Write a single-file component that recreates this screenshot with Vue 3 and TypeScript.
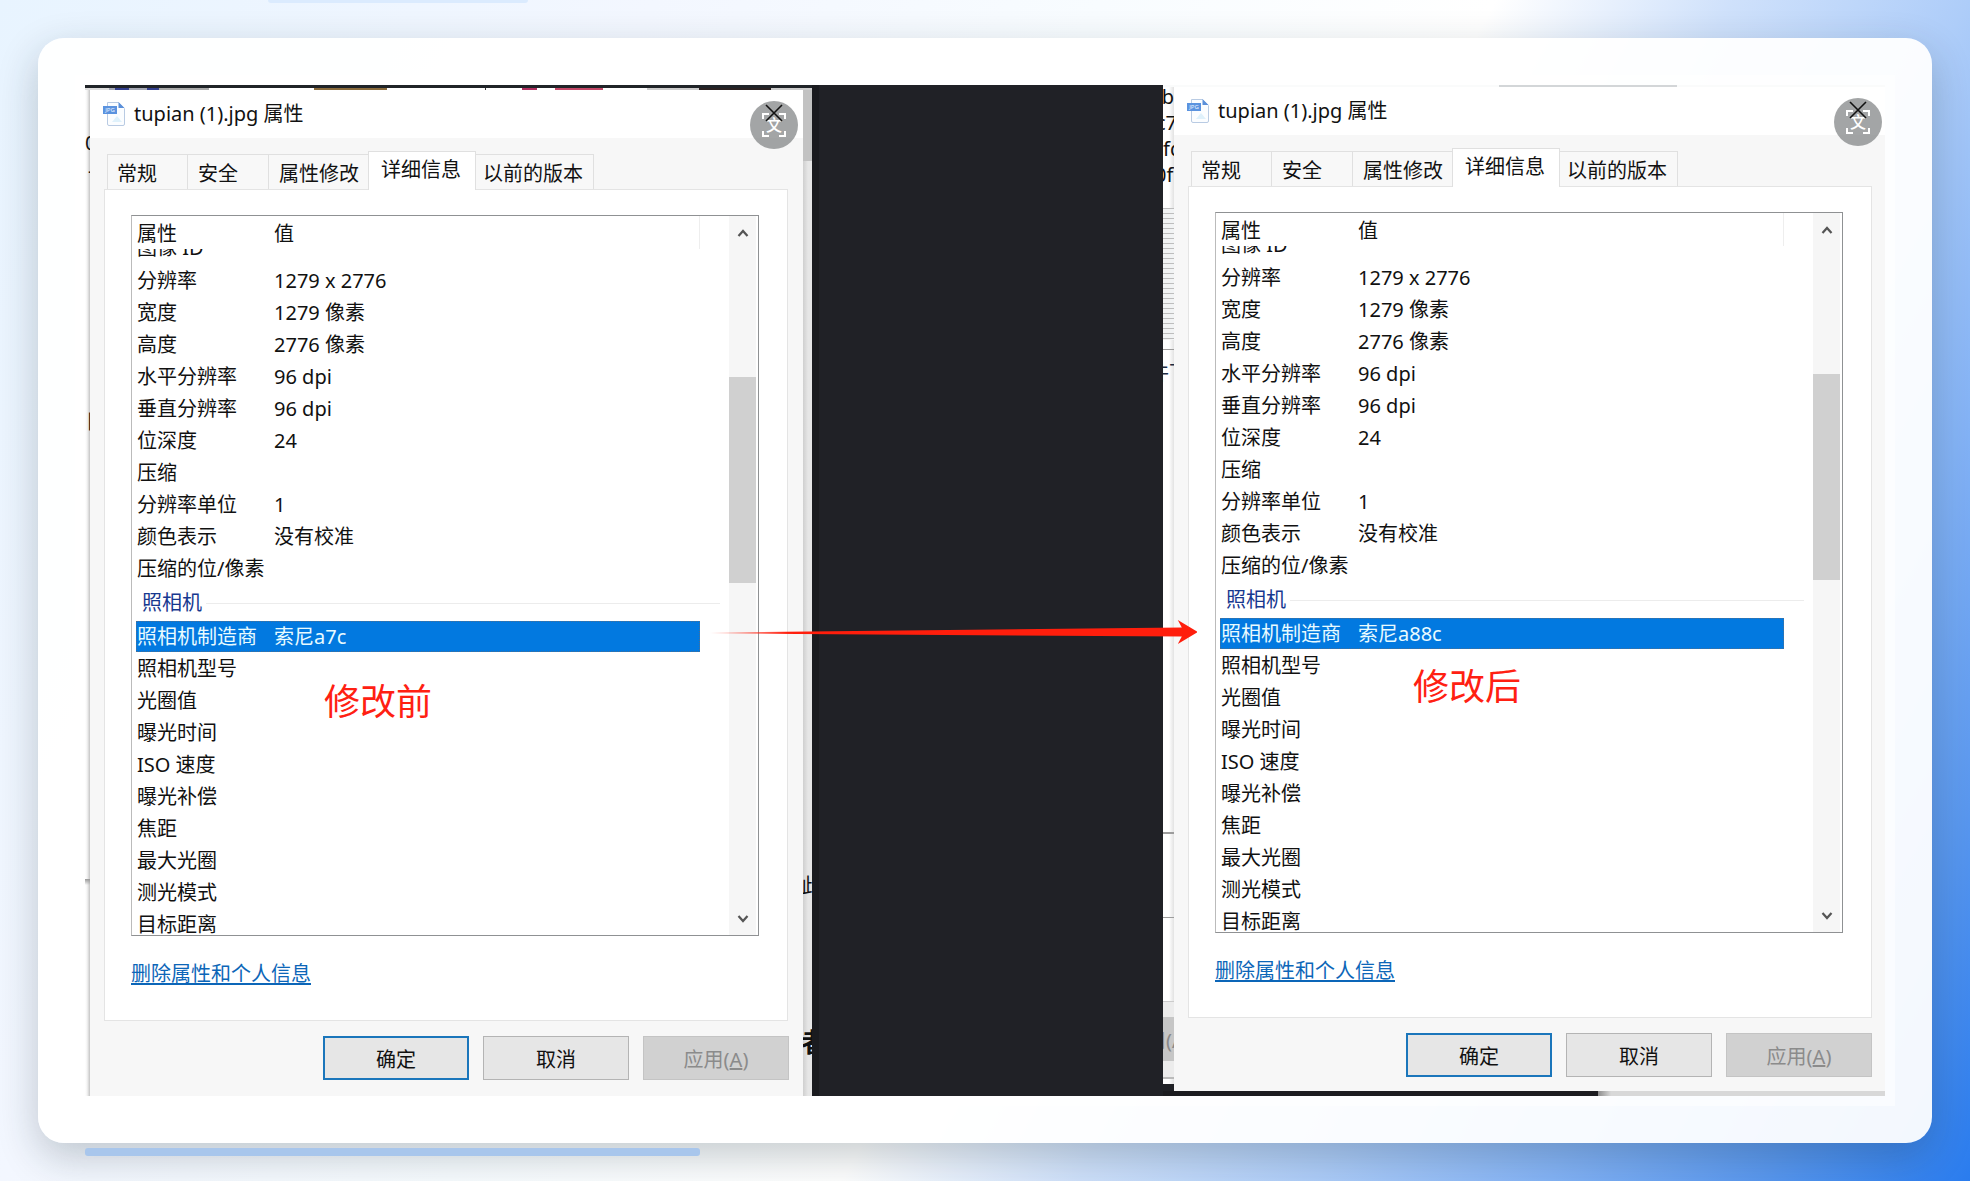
<script setup lang="ts">
interface Row {
  name: string
  value?: string
  kind?: 'cut' | 'group' | 'selected'
}

interface Dialog {
  id: string
  note: string
  rows: Row[]
}

const tabs = ['常规', '安全', '属性修改', '详细信息', '以前的版本']
const activeTab = '详细信息'

function buildRows(maker: string): Row[] {
  return [
    { name: '图像 ID', kind: 'cut' },
    { name: '分辨率', value: '1279 x 2776' },
    { name: '宽度', value: '1279 像素' },
    { name: '高度', value: '2776 像素' },
    { name: '水平分辨率', value: '96 dpi' },
    { name: '垂直分辨率', value: '96 dpi' },
    { name: '位深度', value: '24' },
    { name: '压缩' },
    { name: '分辨率单位', value: '1' },
    { name: '颜色表示', value: '没有校准' },
    { name: '压缩的位/像素' },
    { name: '照相机', kind: 'group' },
    { name: '照相机制造商', value: maker, kind: 'selected' },
    { name: '照相机型号' },
    { name: '光圈值' },
    { name: '曝光时间' },
    { name: 'ISO 速度' },
    { name: '曝光补偿' },
    { name: '焦距' },
    { name: '最大光圈' },
    { name: '测光模式' },
    { name: '目标距离' },
  ]
}

const dialogs: Dialog[] = [
  { id: 'before', note: '修改前', rows: buildRows('索尼a7c') },
  { id: 'after', note: '修改后', rows: buildRows('索尼a88c') },
]
</script>

<template>
  <div class="page">
    <div class="deco deco-top"></div>
    <main class="card">
      <div class="stage">
        <section v-for="d in dialogs" :key="d.id" class="pane" :class="d.id">
          <div class="thumbs"></div>
          <div class="pane-row">
            <div class="edge edge-left">
              <template v-if="d.id === 'before'">
                <span class="frag f-zero">0</span>
                <span class="frag f-dot">-</span>
                <span class="frag f-eye">目</span>
                <span class="notch"></span>
              </template>
              <template v-else>
                <span class="frag g-1">4b</span>
                <span class="frag g-2">c7</span>
                <span class="frag g-3">fd</span>
                <span class="frag g-4">0fl</span>
                <span class="ruled"></span>
                <span class="rule rule-a"></span>
                <span class="frag g-5">件下</span>
                <span class="rule rule-b"></span>
                <span class="rule rule-c"></span>
                <span class="old-footer"><span class="old-button"><span>用(A)</span></span></span>
              </template>
            </div>
            <div class="dialog">
              <header class="titlebar">
                <svg class="file-icon" width="24" height="26" viewBox="0 0 24 26" aria-hidden="true">
                  <path d="M5.500 1.500h11l6 6v15.500a1.500 1.500 0 0 1-1.500 1.500h-14a1.500 1.500 0 0 1-1.500-1.500z" fill="#fbfdff" stroke="#b9cbe3" />
                  <path d="M16.500 1v6h6z" fill="#5b90da" />
                  <path d="M10 21l5-6 5 6z" fill="#dff1fb" />
                  <rect x="1" y="5" width="14" height="8" fill="#5b93df" />
                  <text x="8" y="11" text-anchor="middle" font-size="6" fill="#e8f2ff">JPG</text>
                </svg>
                <h1>tupian (1).jpg 属性</h1>
                <button class="badge" type="button" aria-label="关闭">
                  <svg width="48" height="48" viewBox="0 0 48 48">
                    <circle cx="24" cy="24" r="24" fill="#808284" fill-opacity="0.72" />
                    <path d="M13 18v-5h6M29 13h6v5M35 30v5h-6M19 35h-6v-5" fill="none" stroke="#fff" stroke-width="2" />
                    <text x="24" y="30" text-anchor="middle" font-size="16" font-weight="500" fill="#fff">文</text>
                    <path d="M16 4l16 16M32 4L16 20" fill="none" stroke="#111" stroke-width="1.600" />
                  </svg>
                </button>
              </header>
              <div class="tabs" role="tablist">
                <button
                  v-for="t in tabs"
                  :key="t"
                  type="button"
                  role="tab"
                  class="tab"
                  :class="{ active: t === activeTab }"
                  :aria-selected="t === activeTab"
                >{{ t }}</button>
              </div>
              <div class="panel" role="tabpanel">
                <div class="list">
                  <table class="grid">
                    <thead>
                      <tr><th scope="col">属性</th><th scope="col">值</th></tr>
                    </thead>
                    <tbody>
                      <tr v-for="r in d.rows" :key="r.name" :class="r.kind">
                        <td>{{ r.name }}</td>
                        <td>{{ r.value }}</td>
                      </tr>
                    </tbody>
                  </table>
                  <div class="scrollbar">
                    <button type="button" class="arrow" aria-label="向上滚动">
                      <svg width="12" height="10" viewBox="0 0 12 10"><path d="M1.500 8L6 3l4.500 5" fill="none" stroke="#555" stroke-width="2.200" /></svg>
                    </button>
                    <div class="track"><div class="thumb"></div></div>
                    <button type="button" class="arrow" aria-label="向下滚动">
                      <svg width="12" height="10" viewBox="0 0 12 10"><path d="M1.500 2L6 7l4.500-5" fill="none" stroke="#555" stroke-width="2.200" /></svg>
                    </button>
                  </div>
                </div>
                <a class="clear-link" href="#">删除属性和个人信息</a>
              </div>
              <footer class="actions">
                <button type="button" class="btn primary">确定</button>
                <button type="button" class="btn">取消</button>
                <button type="button" class="btn" disabled>应用(<u>A</u>)</button>
              </footer>
              <p class="note">{{ d.note }}</p>
            </div>
            <div v-if="d.id === 'before'" class="edge edge-right">
              <span class="frag h-1">此</span>
              <span class="frag h-2">者</span>
            </div>
          </div>
          <div class="pane-foot"></div>
        </section>
        <svg class="pointer" viewBox="0 0 488 24" preserveAspectRatio="none" aria-hidden="true">
          <defs>
            <linearGradient id="fade" x1="0" x2="1" y1="0" y2="0">
              <stop offset="0" stop-color="#ff1e0c" stop-opacity="0" />
              <stop offset="0.160" stop-color="#ff1e0c" />
            </linearGradient>
          </defs>
          <path d="M0 12.500L472 7.500L468 0L488 12L468 24L472 16.500L0 13.500z" fill="url(#fade)" />
        </svg>
      </div>
    </main>
    <div class="deco deco-bottom"></div>
  </div>
</template>

<style>
body {
  margin: 0;
}
</style>

<style scoped>
* {
  box-sizing: border-box;
}

.page {
  position: relative;
  min-height: 100vh;
  padding: 38px;
  overflow: hidden;
  background: linear-gradient(119deg, #e8f4ff 0%, #f3f7ff 25%, #f8fcff 42%, #ffffff 57%, #cfe1fb 66%, #aecdf9 75%, #84b3f6 84%, #5a98ef 92%, #2a7cee 100%);
  font-family: "Noto Sans", "Noto Sans CJK SC", sans-serif;
  font-size: 20px;
  color: #111;
}

.deco {
  position: absolute;
}

.deco-top {
  top: 0;
  left: 268px;
  width: 260px;
  height: 3px;
  border-radius: 0 0 8px 8px;
  background: #dbebfe;
}

.deco-bottom {
  top: 1148px;
  left: 85px;
  width: 615px;
  height: 8px;
  border-radius: 3px;
  background: #a8c6ec;
}

.card {
  padding: 47px;
  border-radius: 26px;
  background: rgba(255, 255, 255, 0.94);
  box-shadow: 0 14px 40px rgba(20, 40, 50, 0.24);
}

.stage {
  position: relative;
  display: grid;
  grid-template-columns: 727fr 722fr;
  column-gap: 351px;
  background: linear-gradient(90deg, #1a1b1f 0 734px, #202126 734px);
  box-shadow: 0 0 0 10px rgba(255, 255, 255, 0.5);
}

.pane {
  display: flex;
  flex-direction: column;
  min-width: 0;
}

.pane-row {
  flex: 1;
  display: flex;
  min-height: 0;
}

.before .thumbs {
  height: 5px;
  border-top: 3px solid #202428;
  background: linear-gradient(90deg, #ddd 0 24px, #a5a8b4 24px 30px, #34408e 30px 44px, #a5a8b4 44px 62px, #34408e 62px 74px, #aaa 74px 124px, #fff 124px 229px, #8a6b3c 229px 302px, #fff 302px 400px, #333 400px 401px, #fff 401px 437px, #b03060 437px 452px, #fff 452px 470px, #c44868 470px 518px, #fff 518px 562px, #ccc 562px 614px, #2c2221 614px 686px, #ccc 686px);
}

.after .thumbs {
  height: 2px;
  background: linear-gradient(90deg, #fafbfb 0 336px, #d3d6d8 336px 514px, #fafbfb 514px);
}

.after .pane-foot {
  height: 5px;
  background: linear-gradient(90deg, #1c1c20 0 435px, #8c8c8c 435px, #d8d8d8 448px);
}

.edge {
  position: relative;
  flex: none;
  overflow: hidden;
  background: #fff;
}

.before .edge-left {
  width: 5px;
  background: linear-gradient(90deg, #fff 0, #f4f4f4 2px, #c4c4c4 5px);
}

.after .edge-left {
  width: 11px;
  margin-bottom: 7px;
  background: linear-gradient(90deg, #fff 0 6px, #e2e2e2 11px);
}

.edge-right {
  width: 9px;
  background: linear-gradient(180deg, #c2c2c2 0 71px, transparent 71px), linear-gradient(90deg, #cfcfcf, #e6e6e6 5px);
}

.frag {
  position: absolute;
  line-height: 28px;
  white-space: nowrap;
}

.f-zero { top: 39px; left: 0; }
.f-dot { top: 67px; left: 3px; }
.f-eye { top: 318px; left: 1px; }

.notch {
  position: absolute;
  top: 789px;
  left: 0;
  width: 5px;
  height: 6px;
  background: linear-gradient(#999, transparent);
}

.g-1 { top: -4px; right: 0; }
.g-2 { top: 22px; right: -3px; }
.g-3 { top: 48px; left: 0; }
.g-4 { top: 74px; left: -8px; }
.g-5 { top: 272px; left: -14px; color: #1d2b40; }
.h-1 { top: 782px; left: -2px; }
.h-2 { top: 938px; left: -2px; font-size: 26px; font-weight: 700; }

.ruled {
  position: absolute;
  top: 121px;
  left: 0;
  width: 11px;
  height: 132px;
  background: repeating-linear-gradient(#bdbdbd 0 1px, #f1f3f4 1px 5px);
}

.rule {
  position: absolute;
  left: 0;
  width: 11px;
  height: 1px;
  background: #9c9c9c;
}

.rule-a { top: 262px; }
.rule-b { top: 745px; height: 2px; }
.rule-c { top: 830px; }

.old-footer {
  position: absolute;
  top: 914px;
  left: 0;
  width: 11px;
  height: 78px;
  padding-top: 15px;
  border-top: 1px solid #ccc;
  border-bottom: 2px solid #bbb;
  background: #ececec;
}

.old-button {
  display: flex;
  align-items: center;
  justify-content: center;
  height: 44px;
  background: #c6c6c6;
  color: #888;
  white-space: nowrap;
}

.dialog {
  --edge-right: 15px;
  position: relative;
  flex: 1;
  display: flex;
  flex-direction: column;
  min-width: 0;
  padding-bottom: 16px;
  background: #f7f7f7;
}

.after .dialog {
  --edge-right: 13px;
  padding-bottom: 14px;
}

.titlebar {
  display: flex;
  align-items: center;
  gap: 8px;
  height: 48px;
  padding-left: 12px;
  background: #fff;
}

.titlebar h1 {
  margin: 0;
  font-size: 20px;
  line-height: 28px;
  font-weight: 400;
}

.badge {
  position: absolute;
  top: 11px;
  right: 5px;
  width: 48px;
  height: 48px;
  padding: 0;
  border: 0;
  border-radius: 50%;
  background: none;
  font-family: inherit;
}

.after .badge {
  right: 3px;
}

.badge svg {
  display: block;
}

.tabs {
  display: flex;
  align-items: flex-end;
  height: 51px;
  padding-left: 17px;
}

.tab {
  height: 35px;
  padding: 2px 11px 0 10px;
  border: 1px solid #e0e0e0;
  border-width: 1px 1px 0 0;
  background: #f8f8f8;
  font: inherit;
  line-height: 34px;
  color: inherit;
  text-align: left;
  white-space: nowrap;
}

.tab:nth-child(1) {
  width: 81px;
  padding-left: 9px;
  border-left-width: 1px;
}

.tab:nth-child(2) {
  width: 81px;
}

.tab:nth-child(3) {
  width: 99px;
  border-right: 0;
}

.tab:nth-child(5) {
  width: 118px;
  padding: 2px 7px 0;
}

.tab.active {
  z-index: 1;
  width: 108px;
  height: 39px;
  margin-bottom: -1px;
  padding: 0 12px 2px;
  border-left-width: 1px;
  background: #fff;
}

.panel {
  display: flex;
  flex-direction: column;
  align-items: flex-start;
  margin: 0 var(--edge-right) 0 14px;
  padding: 25px 28px 30px 26px;
  border: 1px solid #e4e4e4;
  background: #fff;
}

.list {
  display: flex;
  align-self: stretch;
  height: 721px;
  overflow: hidden;
  border: 1px solid #8f9193;
  border-left-color: #bbb;
}

.grid {
  flex: 1;
  display: block;
  min-width: 0;
}

.grid thead,
.grid tbody {
  display: block;
}

.grid thead {
  position: relative;
  z-index: 1;
  background: #fff;
}

.grid tr {
  display: grid;
  grid-template-columns: 137px 1fr;
  height: 32px;
  margin: 0 29px 0 4px;
  padding-left: 1px;
  line-height: 32px;
}

.grid th,
.grid td {
  padding: 0;
  font-weight: 400;
  text-align: left;
  white-space: nowrap;
}

.grid thead tr {
  height: 33px;
  line-height: 36px;
  border-right: 1px solid #eee;
}

.grid tbody {
  margin-top: -16px;
}

.grid tr.cut {
  line-height: 30px;
}

.grid tr.group {
  grid-template-columns: auto 1fr;
  column-gap: 4px;
  align-items: center;
  height: 36px;
  margin-right: 9px;
  padding-left: 6px;
  color: #17388f;
}

.grid tr.group td:last-child {
  height: 1px;
  background: #ececec;
}

.grid tr.selected {
  height: 31px;
  margin-bottom: 1px;
  outline: 1px dotted #4b6f92;
  outline-offset: -1px;
  background: #0279e0;
  color: #e9fbff;
}

.scrollbar {
  display: flex;
  flex-direction: column;
  width: 27px;
  margin-right: 2px;
  background: #f6f6f6;
}

.arrow {
  display: flex;
  align-items: center;
  justify-content: center;
  height: 33px;
  padding: 0;
  border: 0;
  background: none;
}

.track {
  flex: 1;
  padding-top: 128px;
}

.thumb {
  height: 206px;
  background: #d0d0d0;
}

.clear-link {
  margin-top: 22px;
  line-height: 32px;
  color: #0c66b8;
  text-decoration: underline;
  text-underline-offset: 2px;
}

.actions {
  display: flex;
  justify-content: flex-end;
  gap: 14px;
  margin: 15px 14px 0 0;
}

.after .actions {
  margin-right: 13px;
}

.btn {
  width: 146px;
  height: 44px;
  padding: 0;
  border: 1px solid #b4b4b4;
  background: #e6e6e6;
  font: inherit;
  color: #111;
}

.btn.primary {
  border: 2px solid #1b76bb;
}

.btn:disabled {
  border-color: #c4c4c4;
  background: #d1d1d1;
  color: #8b8b8b;
}

.note {
  position: absolute;
  top: 588px;
  left: 234px;
  margin: 0;
  font-size: 36px;
  line-height: 48px;
  color: #ff2012;
}

.after .note {
  top: 576px;
  left: 239px;
}

.pointer {
  position: absolute;
  top: 535px;
  left: 34.700%;
  width: 27.100%;
  height: 24px;
}
</style>
